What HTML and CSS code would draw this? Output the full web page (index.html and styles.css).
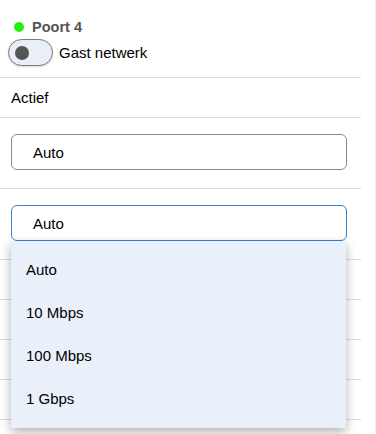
FILE: index.html
```html
<!DOCTYPE html>
<html lang="nl">

<head>
    <meta charset="UTF-8">
    <meta name="viewport" content="width=device-width, initial-scale=1.0">
    <title>Poort 4</title>
    <link rel="stylesheet" href="styles.css">
</head>

<body>
    <section class="page">
        <!-- kop -->
        <div class="port-head">
            <div class="port-title">
                <span class="status-dot"></span>
                <span>Poort 4</span>
            </div>
            <label class="switch-row">
                <span class="switch"><span class="knob"></span></span>
                <span>Gast netwerk</span>
            </label>
        </div>

        <div class="row row-text">Actief</div>

        <div class="row row-field">
            <div class="select">Auto</div>
        </div>

        <div class="row row-field">
            <div class="select-wrap">
                <div class="select focused">Auto</div>
                <!-- open lijst -->
                <ul class="menu">
                    <li>Auto</li>
                    <li>10 Mbps</li>
                    <li>100 Mbps</li>
                    <li>1 Gbps</li>
                </ul>
            </div>
        </div>

        <div class="row"></div>
        <div class="row"></div>
        <div class="row"></div>
        <div class="row"></div>
    </section>
</body>

</html>
```

FILE: styles.css
```css
body {
    margin: 0;
    font-family: "Liberation Sans", Arial, sans-serif;
    font-size: 15px;
    color: #000;
    background: #fff;
}

.page {
    width: 361px;
    padding-right: 14px;
    min-height: 100vh;
    border-right: 1px solid #f1f1f1;
}

.port-head {
    padding: 18px 0 11px 8px;
    border-bottom: 1px solid #dcdcdc;
}

.port-title {
    display: flex;
    align-items: center;
    gap: 8px;
    padding-left: 6px;
    height: 18px;
    font-size: 14.5px;
    font-weight: bold;
    color: #555;
}

.status-dot {
    width: 10px;
    height: 10px;
    border-radius: 50%;
    background: #22ee11;
}

.switch-row {
    display: flex;
    align-items: center;
    gap: 6px;
    margin-top: 3px;
}

.switch {
    display: flex;
    align-items: center;
    box-sizing: border-box;
    width: 45px;
    height: 27px;
    padding-left: 6px;
    border: 1px solid #7a7a7a;
    border-radius: 14px;
    background: #e9eef7;
    box-shadow: 0 1px 2px rgba(0, 0, 0, 0.15);
}

.knob {
    width: 14px;
    height: 14px;
    border-radius: 50%;
    background: #555;
}

.row {
    height: 39px;
    border-bottom: 1px solid #dcdcdc;
}

.row-text {
    display: flex;
    align-items: center;
    padding-left: 11px;
}

.row-field {
    height: 54px;
    padding: 16px 14px 0 11px;
}

.select-wrap {
    position: relative;
}

.select {
    box-sizing: border-box;
    height: 36px;
    display: flex;
    align-items: center;
    padding-left: 21px;
    border: 1px solid #8a8a8a;
    border-radius: 6px;
    background: #fff;
}

.select.focused {
    border-color: #3583cf;
}

.menu {
    position: absolute;
    top: 36px;
    left: 0;
    right: 1px;
    z-index: 2;
    list-style: none;
    margin: 0;
    padding: 7px 0 8px;
    background: #eaf0f9;
    box-shadow: 0 4px 10px rgba(0, 0, 0, 0.3);
}

.menu li {
    height: 43px;
    display: flex;
    align-items: center;
    padding-left: 15px;
}
```
